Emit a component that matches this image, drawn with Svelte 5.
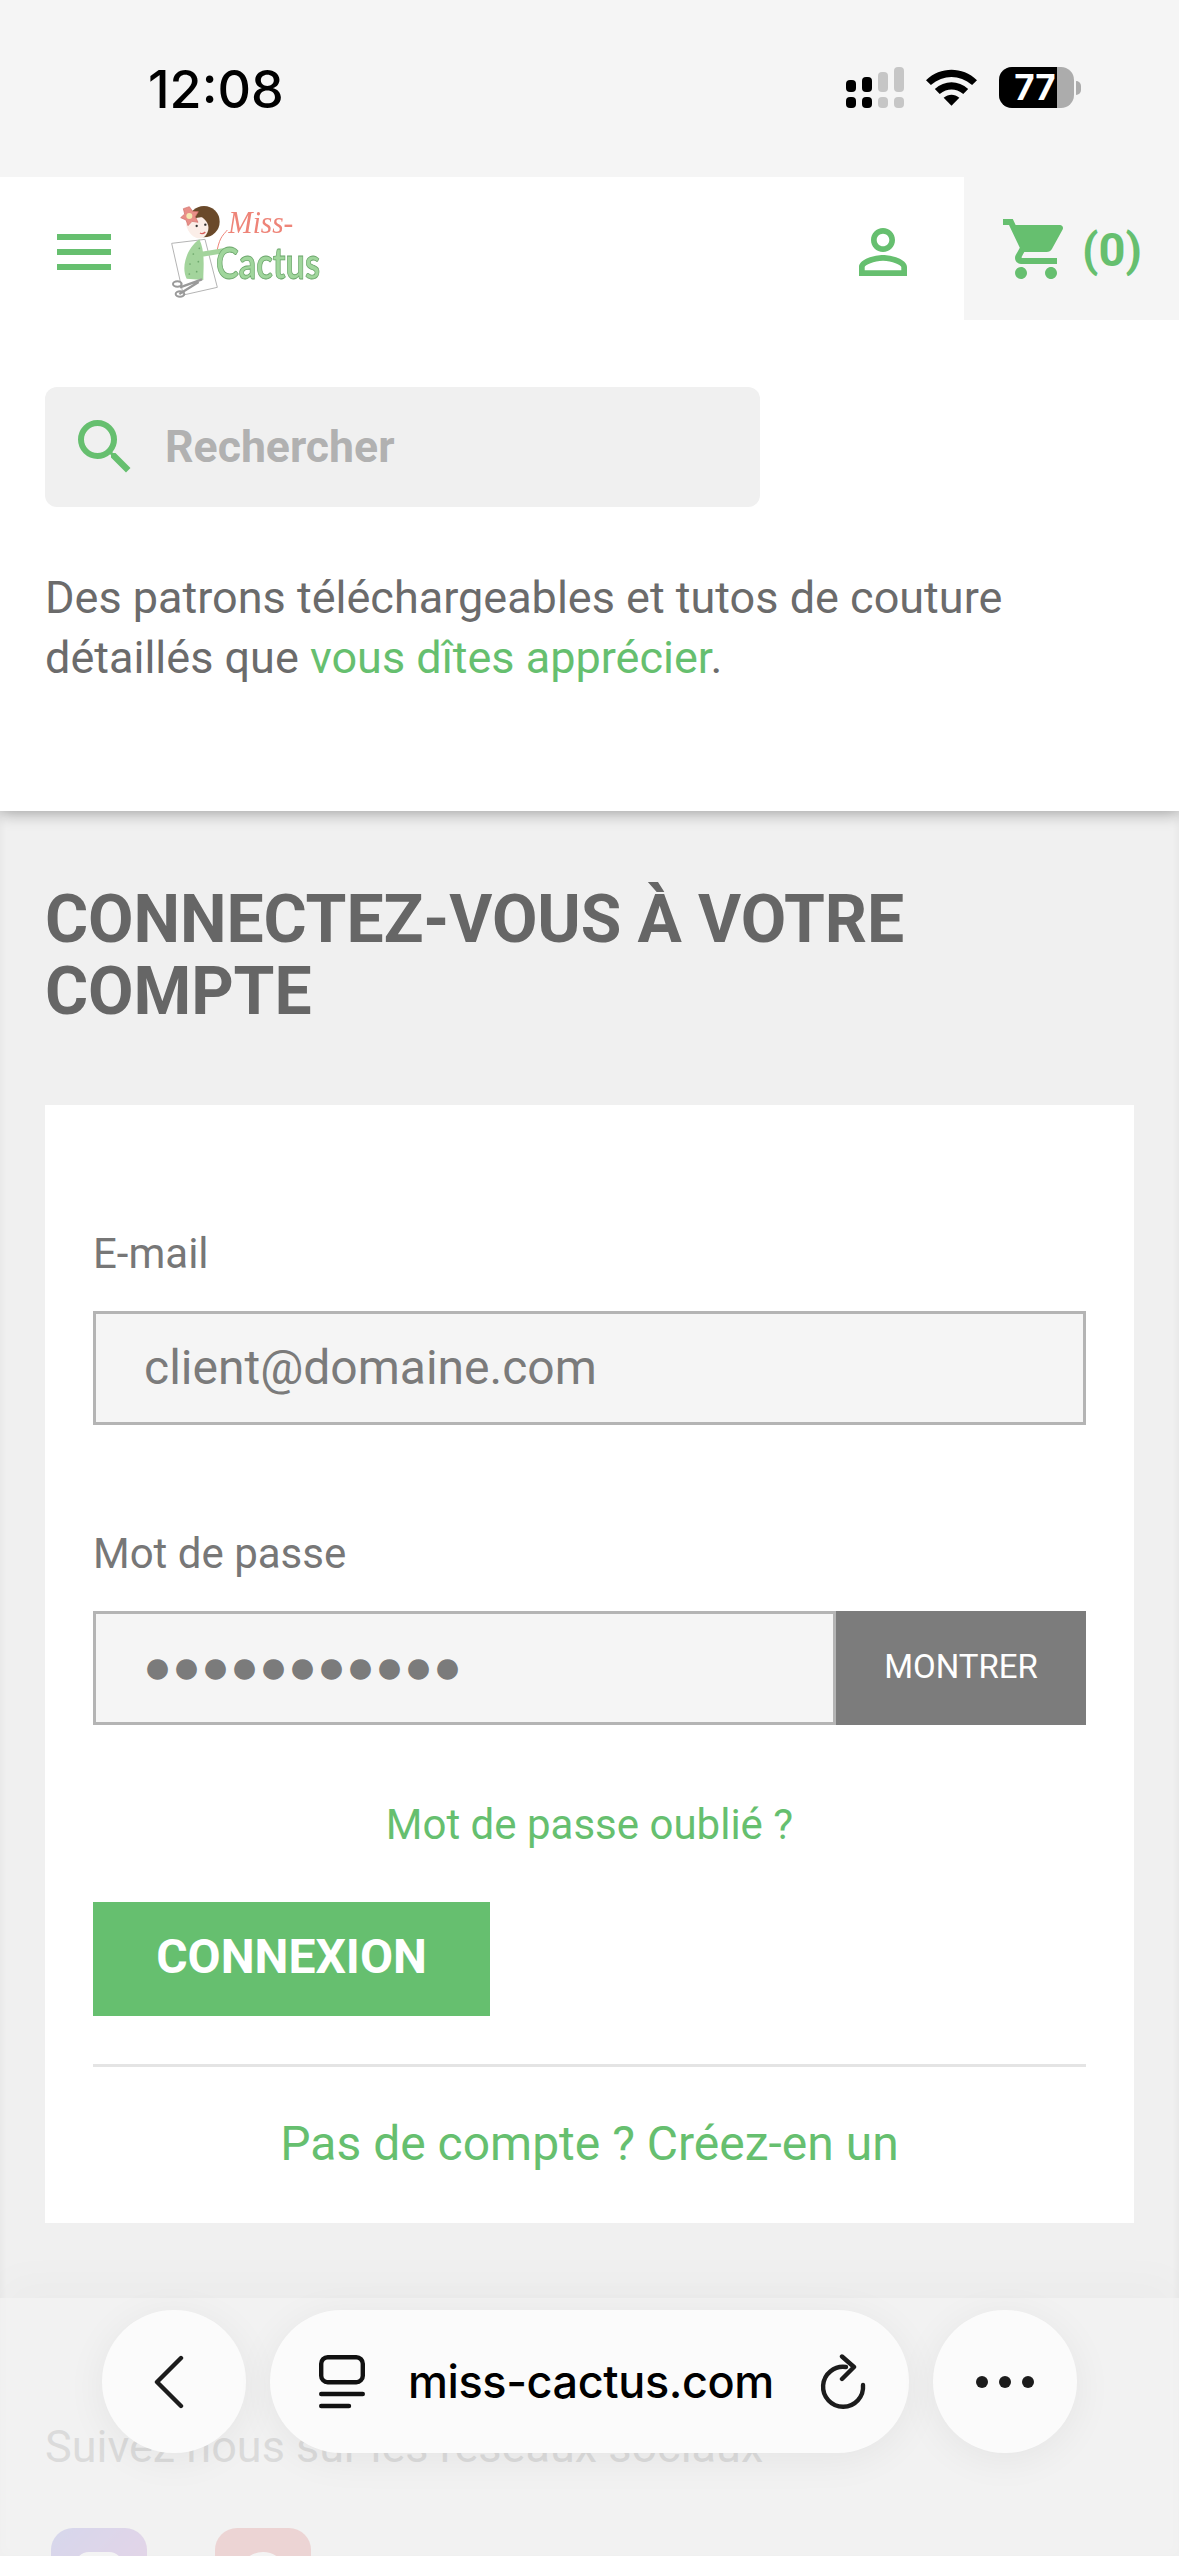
<script>
  const social = ['insta', 'pin'];
</script>

<div class="page">
  <div class="status">
    <span class="time">12:08</span>
    <div class="status-icons">
      <svg class="signal" width="58" height="41" viewBox="0 0 58 41">
        <rect x="0" y="13" width="10" height="12" rx="4" fill="#000"/>
        <rect x="16" y="10" width="10" height="15" rx="4" fill="#000"/>
        <rect x="32" y="5" width="10" height="20" rx="4" fill="#c6c6c6"/>
        <rect x="48" y="0" width="10" height="25" rx="4" fill="#c6c6c6"/>
        <rect x="0" y="30" width="10" height="11" rx="4" fill="#000"/>
        <rect x="16" y="30" width="10" height="11" rx="4" fill="#000"/>
        <rect x="32" y="30" width="10" height="11" rx="4" fill="#c6c6c6"/>
        <rect x="48" y="30" width="10" height="11" rx="4" fill="#c6c6c6"/>
      </svg>
      <svg class="wifi" width="51" height="38" viewBox="0 0 52 38">
        <path d="M0 11 C15 -3 37 -3 52 11 L47 16 C34 5 18 5 5 16 Z" fill="#000"/>
        <path d="M9 20 C19 11 33 11 43 20 L38 25 C30 19 22 19 14 25 Z" fill="#000"/>
        <path d="M18 29 C23 25 29 25 34 29 L26 37 Z" fill="#000"/>
      </svg>
      <div class="battery">
        <div class="batt-body"><div class="batt-fill"><span>77</span></div></div>
        <div class="batt-tip"></div>
      </div>
    </div>
  </div>

  <header class="top">
    <div class="nav">
      <div class="burger"><i></i><i></i><i></i></div>
      <svg class="logo" width="220" height="130" viewBox="0 0 660 390">
        <defs><filter id="soft" x="-5%" y="-5%" width="110%" height="110%"><feGaussianBlur stdDeviation="1.5"/></filter></defs>
        <g filter="url(#soft)">
          <path d="M95 190 L195 178 L232 322 L130 345 Z" fill="#fff" stroke="#b4b4b4" stroke-width="3"/>
          <path d="M178 178 C196 215 190 262 190 300 L140 296 C122 262 140 205 178 178 Z" fill="#a3d49c"/>
          <path d="M190 222 L250 212" stroke="#a3d49c" stroke-width="15" stroke-linecap="round"/>
          <g fill="#6ea96d">
            <circle cx="160" cy="222" r="2.6"/><circle cx="175" cy="245" r="2.6"/><circle cx="150" cy="252" r="2.6"/><circle cx="170" cy="275" r="2.6"/><circle cx="148" cy="282" r="2.6"/><circle cx="178" cy="205" r="2.6"/>
          </g>
          <circle cx="192" cy="125" r="47" fill="#6b4a2a"/>
          <path d="M137 132 C155 120 172 110 186 112 C205 125 212 145 198 165 C184 184 150 178 137 132 Z" fill="#fbeee8"/>
          <circle cx="170" cy="138" r="3.5" fill="#333"/><circle cx="196" cy="134" r="3.5" fill="#333"/>
          <path d="M180 159 Q188 164 196 156" stroke="#d8605c" stroke-width="4" fill="none"/>
          <path d="M148 80 L158 94 L175 95 L166 110 L174 127 L156 124 L144 137 L138 120 L122 113 L134 102 L130 86 Z" fill="#e88f88" stroke="#cf6d66" stroke-width="2"/>
          <circle cx="148" cy="108" r="9" fill="#f5e9b0"/>
          <path d="M120 322 L186 298 M118 342 L176 306" stroke="#999" stroke-width="7" fill="none"/>
          <ellipse cx="112" cy="312" rx="13" ry="8" fill="none" stroke="#999" stroke-width="6"/>
          <ellipse cx="120" cy="342" rx="13" ry="8" fill="none" stroke="#999" stroke-width="6"/>
          <path d="M232 208 C240 170 250 165 262 150" stroke="#ee8478" stroke-width="3" fill="none"/>
          <text x="265" y="160" class="miss" textLength="195" lengthAdjust="spacingAndGlyphs">Miss-</text>
          <text x="228" y="298" class="cactus" textLength="312" lengthAdjust="spacingAndGlyphs">Cactus</text>
        </g>
      </svg>
      <svg class="user" width="72" height="72" viewBox="0 0 24 24"><path fill="#66bf6f" d="M12 5.9c1.16 0 2.1.94 2.1 2.1s-.94 2.1-2.1 2.1S9.9 9.16 9.9 8s.94-2.1 2.1-2.1m0 9c2.97 0 6.1 1.46 6.1 2.1v1.1H5.9V17c0-.64 3.13-2.1 6.1-2.1M12 4C9.79 4 8 5.79 8 8s1.79 4 4 4 4-1.79 4-4-1.79-4-4-4zm0 9c-2.67 0-8 1.34-8 4v3h16v-3c0-2.66-5.33-4-8-4z"/></svg>
      <div class="cart">
        <svg width="72" height="72" viewBox="0 0 24 24"><path fill="#66bf6f" d="M7 18c-1.1 0-1.99.9-1.99 2S5.9 22 7 22s2-.9 2-2-.9-2-2-2zM1 2v2h2l3.6 7.59-1.35 2.45c-.16.28-.25.61-.25.96 0 1.1.9 2 2 2h12v-2H7.42c-.14 0-.25-.11-.25-.25l.03-.12.9-1.63h7.45c.75 0 1.41-.41 1.75-1.03l3.58-6.49c.08-.14.12-.31.12-.48 0-.55-.45-1-1-1H5.21l-.94-2H1zm16 16c-1.1 0-1.99.9-1.99 2s.89 2 1.99 2 2-.9 2-2-.9-2-2-2z"/></svg>
        <span>(0)</span>
      </div>
    </div>
    <div class="search">
      <svg width="72" height="72" viewBox="0 0 24 24"><path fill="#66bf6f" d="M15.5 14h-.79l-.28-.27A6.47 6.47 0 0 0 16 9.5 6.5 6.5 0 1 0 9.5 16c1.61 0 3.09-.59 4.23-1.57l.27.28v.79l5 4.99L20.49 19l-4.99-5zm-6 0C7.01 14 5 11.99 5 9.5S7.01 5 9.5 5 14 7.01 14 9.5 11.99 14 9.5 14z"/></svg>
      <span>Rechercher</span>
    </div>
    <p class="tagline">Des patrons téléchargeables et tutos de couture détaillés que <a href="#a">vous dîtes apprécier</a>.</p>
  </header>

  <main class="main">
    <h1>CONNECTEZ-VOUS À VOTRE COMPTE</h1>
    <section class="card">
      <div class="lab">E-mail</div>
      <div class="field">client@domaine.com</div>
      <div class="lab pw">Mot de passe</div>
      <div class="pwrow">
        <div class="field pwf">●●●●●●●●●●●</div>
        <div class="show">MONTRER</div>
      </div>
      <a class="forgot" href="#f">Mot de passe oublié ?</a>
      <div class="btn">CONNEXION</div>
      <hr />
      <a class="create" href="#c">Pas de compte ? Créez-en un</a>
    </section>
    <p class="follow">Suivez nous sur les réseaux sociaux</p>
    <div class="socials">
      {#each social as s}<div class="soc {s}"><i></i></div>{/each}
    </div>
  </main>

  <div class="toolbar">
    <div class="pill round back">
      <svg width="30" height="54" viewBox="0 0 30 54"><path d="M27 3 L3 27 L27 51" fill="none" stroke="#1c1c1c" stroke-width="4.4" stroke-linecap="round" stroke-linejoin="round"/></svg>
    </div>
    <div class="pill url">
      <svg width="46" height="54" viewBox="0 0 46 54"><rect x="2.2" y="2.2" width="41.6" height="25" rx="6.5" fill="none" stroke="#111" stroke-width="4.4"/><path d="M2.2 39 H43.8 M2.2 51 H30" stroke="#111" stroke-width="4.4" stroke-linecap="round"/></svg>
      <span>miss-cactus.com</span>
      <svg class="reload" width="48" height="56" viewBox="0 0 48 56"><path d="M43 31 A20 20 0 1 1 26 13" fill="none" stroke="#1c1c1c" stroke-width="4.4" stroke-linecap="round"/><path d="M22 2.5 L34 13 L22 25" fill="none" stroke="#1c1c1c" stroke-width="4.4" stroke-linecap="round" stroke-linejoin="round"/></svg>
    </div>
    <div class="pill round">
      <svg width="58" height="12" viewBox="0 0 58 12"><circle cx="6" cy="6" r="6" fill="#1c1c1c"/><circle cx="29" cy="6" r="6" fill="#1c1c1c"/><circle cx="52" cy="6" r="6" fill="#1c1c1c"/></svg>
    </div>
  </div>
</div>

<style>
  :global(body) { margin: 0; background: #f0f0f0; }
  .page { position: relative; width: 1179px; height: 2556px; overflow: hidden; font-family: Roboto, sans-serif; background: #f0f0f0; }
  .status { position: relative; z-index: 1; height: 177px; background: #f5f5f5; display: flex; justify-content: space-between; box-sizing: border-box; padding: 58px 0 0 148px; }
  .time { font: 500 52px/58px Inter, Roboto, sans-serif; color: #000; padding-top: 3px; }
  .status-icons { display: flex; align-items: flex-start; margin: 9px 98px 0 0; gap: 22px; }
  .wifi { margin-top: 2px; }
  .battery { display: flex; align-items: center; }
  .batt-body { width: 75px; height: 41px; border-radius: 13px; background: #acacac; overflow: hidden; }
  .batt-fill { width: 58px; height: 41px; background: #000; display: flex; align-items: center; justify-content: center; }
  .batt-fill span { color: #fff; font: 700 35px/41px Inter, sans-serif; padding-left: 14px; }
  .batt-tip { width: 5px; height: 14px; margin-left: 2px; border-radius: 0 7px 7px 0; background: #acacac; }

  .top { height: 634px; background: #fff; box-shadow: 0 4px 14px rgba(0,0,0,.26); position: relative; box-sizing: border-box; }
  .nav { height: 143px; display: flex; align-items: flex-start; }
  .burger { width: 54px; margin: 57px 0 0 57px; display: flex; flex-direction: column; gap: 9px; }
  .burger i { display: block; height: 6px; background: #66bf6f; }
  .logo { margin: 3px 0 0 29px; }
  .miss { font: italic 400 92px "Liberation Serif", serif; fill: #ee8478; }
  .cactus { font: 700 132px "Lato", sans-serif; fill: #a0d69c; stroke: #6aa56a; stroke-width: 2.5; }
  .user { margin: 39px 0 0 auto; }
  .cart { width: 215px; height: 143px; margin-left: 45px; background: #f5f5f5; display: flex; align-items: center; box-sizing: border-box; padding-left: 36px; gap: 10px; color: #66bf6f; font: 700 47px Roboto, sans-serif; }
  .cart span { padding-top: 2px; }
  .search { margin: 67px 0 0 45px; width: 715px; height: 120px; background: #f0f0f0; border-radius: 12px; display: flex; align-items: center; box-sizing: border-box; padding-left: 24px; gap: 24px; }
  .search span { font: 700 44.6px Roboto, sans-serif; color: #b1b1b1; }
  .tagline { margin: 61px 0 0 45px; width: 1040px; font: 400 45px/60px Roboto, sans-serif; color: #6b6b6b; }
  .tagline a { color: #66bf6f; text-decoration: none; }

  .main { height: 1745px; box-sizing: border-box; padding: 73px 45px 0; box-shadow: inset 0 0 8px rgba(0,0,0,.06); }
  h1 { margin: 0; font: 700 66px/72px Roboto, sans-serif; color: #666; width: 1000px; letter-spacing: -.1px; }
  .card { margin-top: 77px; height: 1118px; background: #fff; box-sizing: border-box; padding: 122px 48px 0; display: flex; flex-direction: column; align-items: stretch; }
  .lab { font: 400 42px/54px Roboto, sans-serif; color: #777; }
  .field { margin-top: 30px; height: 114px; box-sizing: border-box; border: 3px solid #b4b4b4; background: #f5f5f5; font: 400 48px/108px Roboto, sans-serif; color: #7b7b7b; padding-left: 48px; }
  .pw { margin-top: 102px; }
  .pwrow { display: flex; margin-top: 30px; }
  .pwf { margin-top: 0; flex: 1; font-size: 48px; line-height: 105px; padding-left: 47px; }
  .show { width: 250px; height: 114px; background: #7c7c7c; color: #fff; font: 400 33px/112px Roboto, sans-serif; text-align: center; }
  .forgot { margin-top: 73px; text-align: center; font: 400 42px/54px Roboto, sans-serif; color: #66bf6f; text-decoration: none; }
  .btn { margin-top: 50px; width: 397px; height: 114px; background: #66bf6f; color: #fff; font: 700 48px/110px Roboto, sans-serif; text-align: center; }
  hr { margin: 48px 0 0; width: 100%; height: 3px; border: 0; background: #e4e4e4; }
  .create { margin-top: 47px; text-align: center; font: 400 48px/60px Roboto, sans-serif; color: #66bf6f; text-decoration: none; }
  .follow { margin: 196px 0 0; font: 400 45px/56px Roboto, sans-serif; color: #777; }
  .socials { display: flex; gap: 68px; margin-top: 53px; padding-left: 6px; }
  .soc { width: 96px; height: 96px; border-radius: 22px; position: relative; }
  .soc i { position: absolute; left: 24px; top: 24px; width: 48px; height: 48px; box-sizing: border-box; border: 7px solid #fff; }
  .insta { background: linear-gradient(135deg, #5a5fd0, #c04bb0); }
  .insta i { border-radius: 14px; }
  .pin { background: #d4504f; }
  .pin i { border-radius: 50%; }

  .toolbar { position: absolute; left: 0; right: 0; top: 2298px; height: 258px; background: rgba(242,242,242,.82); box-shadow: 0 -20px 40px rgba(0,0,0,.02); display: flex; padding: 12px 0 0 102px; box-sizing: border-box; gap: 24px; align-items: flex-start; }
  .pill { height: 143px; background: #fbfbfb; border-radius: 72px; display: flex; align-items: center; box-shadow: 0 6px 40px rgba(0,0,0,.06); flex: none; }
  .round { width: 144px; justify-content: center; }
  .back svg { margin-right: 10px; }
  .url { width: 639px; box-sizing: border-box; padding: 0 41px 0 49px; }
  .url span { font: 500 45px Inter, Roboto, sans-serif; color: #000; letter-spacing: -.4px; margin-left: 43px; white-space: nowrap; }
  .reload { margin-left: auto; }
</style>
